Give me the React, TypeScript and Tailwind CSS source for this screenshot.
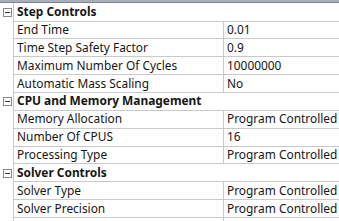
import React from "react";

type Row = { kind: "h"; label: string } | { kind: "r"; label: string; value: string };

const rows: Row[] = [
  { kind: "h", label: "Step Controls" },
  { kind: "r", label: "End Time", value: "0.01" },
  { kind: "r", label: "Time Step Safety Factor", value: "0.9" },
  { kind: "r", label: "Maximum Number Of Cycles", value: "10000000" },
  { kind: "r", label: "Automatic Mass Scaling", value: "No" },
  { kind: "h", label: "CPU and Memory Management" },
  { kind: "r", label: "Memory Allocation", value: "Program Controlled" },
  { kind: "r", label: "Number Of CPUS", value: "16" },
  { kind: "r", label: "Processing Type", value: "Program Controlled" },
  { kind: "h", label: "Solver Controls" },
  { kind: "r", label: "Solver Type", value: "Program Controlled" },
  { kind: "r", label: "Solver Precision", value: "Program Controlled" },
  { kind: "r", label: "", value: "" },
];

function MinusBox() {
  return (
    <div className="w-[9px] h-[9px] border border-[#8a8a8a] bg-white flex items-center justify-center">
      <div className="w-[5px] h-[1px] bg-[#333]" />
    </div>
  );
}

export default function App() {
  return (
    <div
      className="w-[339px] h-[221px] overflow-hidden bg-white text-[#161616] text-[11.9px]"
      style={{ fontFamily: '"Noto Sans", "Open Sans", sans-serif' }}
    >
      <div className="h-[3px] bg-[#a7b0b8] border-b border-[#7d868e]" />
      {rows.map((r, i) => (
        <div key={i} className={`flex ${i === 0 ? "h-[18.5px]" : "h-[17.86px]"}`}>
          <div className="w-[13px] shrink-0 flex items-center justify-center pl-[1px]">
            {r.kind === "h" ? <MinusBox /> : null}
          </div>
          <div className="flex-1 flex border-l border-b border-[#c9c9c9] min-w-0">
            {r.kind === "h" ? (
              <div className="flex-1 flex items-center pl-[3px] font-bold whitespace-nowrap leading-none">
                {r.label}
              </div>
            ) : (
              <>
                <div className="w-[210px] shrink-0 flex items-center pl-[3px] border-r border-[#c9c9c9] whitespace-nowrap leading-none">
                  {r.label}
                </div>
                <div className="flex-1 flex items-center pl-[3px] whitespace-nowrap leading-none">
                  {r.value}
                </div>
              </>
            )}
          </div>
        </div>
      ))}
    </div>
  );
}
